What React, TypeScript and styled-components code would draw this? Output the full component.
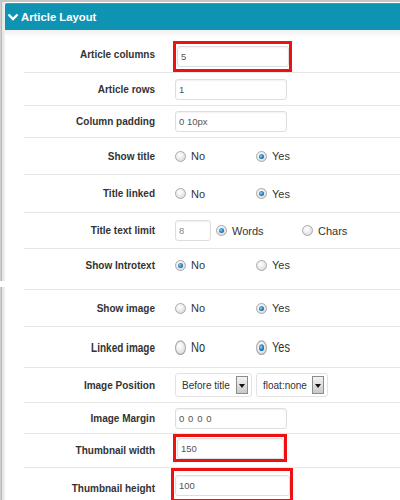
import React from 'react';
import styled, { createGlobalStyle, css } from 'styled-components';

const Global = createGlobalStyle`
  html, body { margin: 0; padding: 0; background: #fff; }
  body { font-family: "Liberation Sans", Arial, sans-serif; }
  #root { width: 400px; height: 500px; overflow: hidden; }
`;

const Page = styled.div`
  width: 400px;
  height: 500px;
  overflow: hidden;
  display: flex;
  flex-direction: column;
  gap: 6px;
`;

const Frame = styled.section<{ $top?: boolean }>`
  flex-shrink: 0;
  padding-left: 5px;
  background: linear-gradient(
    to right,
    #cfcfcf 0,
    #cfcfcf 1px,
    #b9b9b9 1px,
    #b9b9b9 2px,
    #e4e4e4 2px,
    #f0f0f0 5px,
    #fff 5px
  );
  ${(p) =>
    p.$top
      ? css`
          border-top: 2px solid #c6c6c6;
          padding-top: 1px;
        `
      : css`
          padding-top: 2px;
        `}
`;

const Header = styled.div`
  height: 27px;
  box-sizing: border-box;
  display: flex;
  align-items: center;
  gap: 2px;
  padding-left: 2px;
  background: #0f93b2;
  border-top: 1px solid #2aa2bf;
  border-radius: 2px 0 0 0;
  color: #fff;
  font-weight: bold;
  font-size: 11.3px;
`;

const Body = styled.div`
  padding-top: 6px;
  background: linear-gradient(#efefef, #fff 7px);
`;

const Row = styled.div<{ $h: number; $top?: boolean; $last?: boolean; $stretch?: boolean }>`
  box-sizing: border-box;
  height: ${(p) => p.$h}px;
  margin-left: 19px;
  display: flex;
  align-items: center;
  border-bottom: ${(p) => (p.$last ? 'none' : '1px solid #e6e6e6')};
  ${(p) => p.$top && 'border-top: 1px solid #e6e6e6;'}
  ${(p) =>
    p.$stretch &&
    css`
      & > * {
        transform: scaleY(1.35);
      }
    `}
`;

const Label = styled.div`
  width: 131px;
  flex-shrink: 0;
  text-align: right;
  font-weight: bold;
  font-size: 10px;
  color: #333;
  white-space: nowrap;
`;

const Controls = styled.div`
  margin-left: 20px;
  display: flex;
  align-items: center;
  align-self: stretch;
`;

const Field = styled.input<{ $w?: number; $light?: boolean; $spaced?: boolean }>`
  box-sizing: border-box;
  width: ${(p) => p.$w ?? 112}px;
  height: 21px;
  border: 1px solid #dedede;
  border-radius: 3px;
  box-shadow: inset 0 1px 2px rgba(0, 0, 0, 0.06);
  padding: 0 0 0 3px;
  margin: 0;
  font-family: "Liberation Sans", Arial, sans-serif;
  font-size: 9.5px;
  letter-spacing: ${(p) => (p.$spaced ? '0.6px' : '0')};
  color: ${(p) => (p.$light ? '#888' : '#555')};
  background: #fff;
  outline: none;
`;

const Highlight = styled.div<{ $w: number; $h: number; $ml: number; $align: string }>`
  box-sizing: border-box;
  width: ${(p) => p.$w}px;
  height: ${(p) => p.$h}px;
  margin-left: ${(p) => p.$ml}px;
  align-self: ${(p) => p.$align};
  border: 3px solid #ee1111;
  display: flex;
  align-items: center;
  padding: 0 0 0 1px;
  & > input {
    flex: 1;
    min-width: 0;
  }
`;

const CenterWrap = styled.div`
  display: flex;
  align-items: center;
  align-self: center;
  gap: 5px;
`;

const Option = styled.label`
  width: 81px;
  display: flex;
  align-items: center;
  gap: 5px;
  font-size: 11px;
  color: #333;
`;

const Dot = styled.span<{ $on?: boolean }>`
  position: relative;
  box-sizing: border-box;
  width: 11px;
  height: 11px;
  flex-shrink: 0;
  border-radius: 50%;
  border: 1px solid #a9a9a9;
  background: radial-gradient(circle at 40% 35%, #ffffff 0, #f1f1f1 35%, #d2d2d2 100%);
  ${(p) =>
    p.$on &&
    css`
      &::after {
        content: '';
        position: absolute;
        left: 2px;
        top: 2px;
        width: 5px;
        height: 5px;
        border-radius: 50%;
        background: radial-gradient(circle at 40% 40%, #9ad6f7 0, #2a86c2 45%, #0c4a78 100%);
      }
    `}
`;

const Select = styled.div<{ $w: number }>`
  box-sizing: border-box;
  width: ${(p) => p.$w}px;
  height: 24px;
  border: 1px solid #e2e2e2;
  border-radius: 3px;
  display: flex;
  align-items: center;
  justify-content: space-between;
  padding: 0 3px 0 6px;
  font-size: 10px;
  color: #333;
  background: #fff;
`;

const Arrow = styled.span`
  position: relative;
  box-sizing: border-box;
  width: 12px;
  height: 18px;
  border: 1px solid #8c8c8c;
  background: linear-gradient(#f4f4f4, #c9c9c9);
  &::after {
    content: '';
    position: absolute;
    left: 2px;
    top: 7px;
    border-left: 3px solid transparent;
    border-right: 3px solid transparent;
    border-top: 4px solid #111;
  }
`;

const SelectGroup = styled.div`
  display: flex;
  align-items: center;
  align-self: center;
  gap: 4px;
`;

function Chevron() {
  return (
    <svg width="12" height="8" viewBox="0 0 12 8">
      <polyline points="1.5,1.5 6,6 10.5,1.5" fill="none" stroke="#fff" strokeWidth="2.4" />
    </svg>
  );
}

function Radios({ on, a = 'No', b = 'Yes' }: { on: 0 | 1; a?: string; b?: string }) {
  return (
    <>
      <Option>
        <Dot $on={on === 0} />
        {a}
      </Option>
      <Option>
        <Dot $on={on === 1} />
        {b}
      </Option>
    </>
  );
}

export default function App() {
  return (
    <Page>
      <Global />
      <Frame $top>
        <Header>
          <Chevron />
          Article Layout
        </Header>
        <Body>
          <Row $h={37}>
            <Label>Article columns</Label>
            <Controls>
              <Highlight $w={119} $h={31} $ml={-2} $align="flex-end">
                <Field readOnly value="5" />
              </Highlight>
            </Controls>
          </Row>
          <Row $h={33}>
            <Label>Article rows</Label>
            <Controls>
              <CenterWrap>
                <Field readOnly value="1" />
              </CenterWrap>
            </Controls>
          </Row>
          <Row $h={32}>
            <Label>Column padding</Label>
            <Controls>
              <CenterWrap>
                <Field readOnly value="0 10px" />
              </CenterWrap>
            </Controls>
          </Row>
          <Row $h={37}>
            <Label>Show title</Label>
            <Controls>
              <Radios on={1} />
            </Controls>
          </Row>
          <Row $h={38}>
            <Label>Title linked</Label>
            <Controls>
              <Radios on={1} />
            </Controls>
          </Row>
          <Row $h={36}>
            <Label>Title text limit</Label>
            <Controls>
              <CenterWrap>
                <Field readOnly value="8" $w={36} $light />
                <Radios on={0} a="Words" b="Chars" />
              </CenterWrap>
            </Controls>
          </Row>
          <Row $h={32} $last>
            <Label>Show Introtext</Label>
            <Controls>
              <Radios on={0} />
            </Controls>
          </Row>
        </Body>
      </Frame>
      <Frame>
        <Row $h={38} $top>
          <Label>Show image</Label>
          <Controls>
            <Radios on={1} />
          </Controls>
        </Row>
        <Row $h={41} $stretch>
          <Label>Linked image</Label>
          <Controls>
            <Radios on={1} />
          </Controls>
        </Row>
        <Row $h={35}>
          <Label>Image Position</Label>
          <Controls>
            <SelectGroup>
              <Select $w={77}>
                Before title
                <Arrow />
              </Select>
              <Select $w={72}>
                float:none
                <Arrow />
              </Select>
            </SelectGroup>
          </Controls>
        </Row>
        <Row $h={31}>
          <Label>Image Margin</Label>
          <Controls>
            <CenterWrap>
              <Field readOnly value="0 0 0 0" $spaced />
            </CenterWrap>
          </Controls>
        </Row>
        <Row $h={34}>
          <Label>Thumbnail width</Label>
          <Controls>
            <Highlight $w={114} $h={28} $ml={-2} $align="flex-start">
              <Field readOnly value="150" />
            </Highlight>
          </Controls>
        </Row>
        <Row $h={40} $last>
          <Label>Thumbnail height</Label>
          <Controls>
            <Highlight $w={122} $h={34} $ml={-4} $align="flex-start">
              <Field readOnly value="100" />
            </Highlight>
          </Controls>
        </Row>
      </Frame>
    </Page>
  );
}
